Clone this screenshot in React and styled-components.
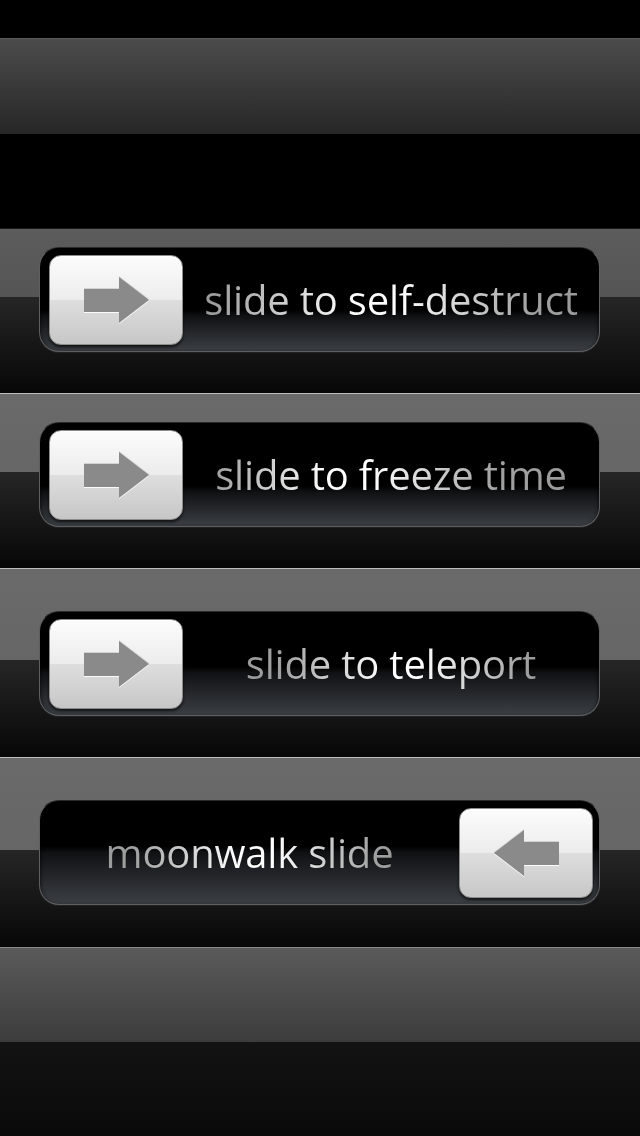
import React from "react";
import styled, { createGlobalStyle } from "styled-components";

const GlobalStyle = createGlobalStyle`
  html, body {
    margin: 0;
    padding: 0;
    background: #000;
  }
  * { box-sizing: border-box; }
`;

const Screen = styled.div`
  width: 640px;
  height: 1136px;
  overflow: hidden;
  display: flex;
  flex-direction: column;
  background: #000;
`;

const TopGap = styled.div`
  height: 38px;
  flex: none;
  background: #000;
`;

/* A horizontal stripe: a lighter upper half and a darker lower half */
const Band = styled.section`
  flex: none;
  height: ${(p) => p.$h}px;
  padding-top: ${(p) => p.$pad || 0}px;
  border-top: 1px solid ${(p) => p.$line};
  background: linear-gradient(
    to bottom,
    ${(p) => p.$upper[0]} 0px,
    ${(p) => p.$upper[1]} ${(p) => p.$split}px,
    ${(p) => p.$lower[0]} ${(p) => p.$split}px,
    ${(p) => p.$lower[1]} 100%
  );
`;

const Track = styled.div`
  margin-left: 39px;
  width: 561px;
  height: 105px;
  border-radius: 20px;
  border: 1px solid #5e5f61;
  border-top-color: #2a2a2a;
  background: linear-gradient(
    to bottom,
    #000 0%,
    #000 ${(p) => p.$gloss - 6}%,
    #101113 ${(p) => p.$gloss}%,
    #3b3f44 100%
  );
  box-shadow: 0 1px 0 rgba(255, 255, 255, 0.06), inset 0 2px 4px rgba(0, 0, 0, 0.9);
  display: flex;
  flex-direction: ${(p) => (p.$reverse ? "row-reverse" : "row")};
  align-items: center;
  padding-left: ${(p) => (p.$reverse ? 0 : 9)}px;
  padding-right: ${(p) => (p.$reverse ? 6 : 0)}px;
`;

const Knob = styled.div`
  flex: none;
  width: 134px;
  height: 90px;
  border-radius: 12px;
  border: 1px solid #8d8d8d;
  background: linear-gradient(
    to bottom,
    #fcfcfc 0%,
    #ececec 50%,
    #dedede 50%,
    #c7c7c7 100%
  );
  box-shadow: 0 2px 3px rgba(0, 0, 0, 0.7), inset 0 1px 0 #fff;
  display: flex;
  align-items: center;
  justify-content: center;
`;

const ArrowIcon = styled.svg`
  width: 65px;
  height: 46px;
  filter: drop-shadow(0 1px 0 rgba(255, 255, 255, 0.9)) drop-shadow(0 -1px 0 rgba(0, 0, 0, 0.12));
  transform: ${(p) => (p.$left ? "scaleX(-1)" : "none")};
`;

const Label = styled.div`
  flex: 1;
  text-align: center;
  font-family: "Open Sans", "Liberation Sans", sans-serif;
  font-size: 40px;
  line-height: 1;
  letter-spacing: -0.2px;
  padding-top: 5px;
  filter: drop-shadow(0 -1px 0 rgba(0, 0, 0, 0.8));
`;

const Shine = styled.span`
  display: inline-block;
  color: transparent;
  -webkit-background-clip: text;
  background-clip: text;
  background-image: linear-gradient(
    90deg,
    #9a9a9a 0%,
    #a0a0a0 ${(p) => p.$at - 42}%,
    #ffffff ${(p) => p.$at - 6}%,
    #ffffff ${(p) => p.$at + 6}%,
    #a0a0a0 ${(p) => p.$at + 42}%,
    #9a9a9a 100%
  );
  padding: 4px 0 8px;
`;

const Arrow = ({ left }) => (
  <ArrowIcon viewBox="0 0 65 46" $left={left}>
    <path d="M0 12 H35 V0 L65 23 L35 46 V35 H0 Z" fill="#8a8a8a" />
  </ArrowIcon>
);

const Slider = ({ text, shine, gloss, reverse }) => (
  <Track $gloss={gloss} $reverse={reverse}>
    <Knob>
      <Arrow left={reverse} />
    </Knob>
    <Label>
      <Shine $at={shine}>{text}</Shine>
    </Label>
  </Track>
);

const grayUpper = ["#6a6a6a", "#666666"];
const darkLower = ["#262626", "#070707"];

export default function App() {
  return (
    <>
      <GlobalStyle />
      <Screen>
        <TopGap />
        <Band
          $h={190}
          $split={95}
          $line="#5a5a5a"
          $upper={["#4b4b4b", "#272727"]}
          $lower={["#000000", "#000000"]}
        />
        <Band
          $h={165}
          $split={68}
          $pad={18}
          $line="#1a1a1a"
          $upper={["#5c5c5c", "#555555"]}
          $lower={darkLower}
        >
          <Slider text="slide to self-destruct" shine={46} gloss={66} />
        </Band>
        <Band $h={175} $split={78} $pad={28} $line="#bdbdbd" $upper={grayUpper} $lower={darkLower}>
          <Slider text="slide to freeze time" shine={38} gloss={67} />
        </Band>
        <Band $h={189} $split={91} $pad={42} $line="#bdbdbd" $upper={grayUpper} $lower={darkLower}>
          <Slider text="slide to teleport" shine={54} gloss={59} />
        </Band>
        <Band $h={190} $split={92} $pad={42} $line="#bdbdbd" $upper={grayUpper} $lower={darkLower}>
          <Slider text="moonwalk slide" shine={52} gloss={50} reverse />
        </Band>
        <Band
          $h={189}
          $split={94}
          $line="#8a8a8a"
          $upper={["#5a5a5a", "#3c3c3c"]}
          $lower={["#131313", "#0a0a0a"]}
        />
      </Screen>
    </>
  );
}
